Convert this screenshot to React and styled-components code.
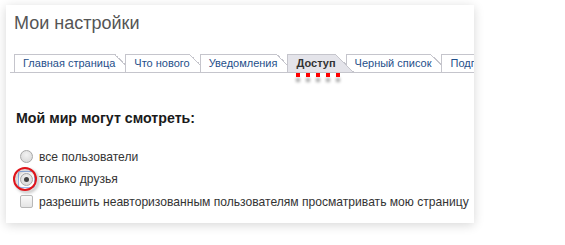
import styled, { createGlobalStyle } from "styled-components";

const Global = createGlobalStyle`
  body {
    margin: 0;
    background: #fff;
    font-family: "Liberation Sans", Arial, sans-serif;
  }
`;

const Page = styled.div`
  padding: 5px 0 0 6px;
  width: 565px;
  height: 245px;
  box-sizing: border-box;
`;

const Card = styled.div`
  width: 468px;
  height: 218px;
  background: #fff;
  box-shadow: 0 2px 10px rgba(0, 0, 0, 0.16);
  overflow: hidden;
`;

const Title = styled.h1`
  margin: 7px 0 0 8px;
  font-size: 18px;
  line-height: 22px;
  font-weight: normal;
  color: #555;
`;

const TabBar = styled.div`
  display: flex;
  margin: 20px 0 0 4px;
  padding-left: 4px;
  height: 18px;
  border-bottom: 1px solid #c5c5cc;
  white-space: nowrap;
`;

const Tab = styled.div`
  position: relative;
  z-index: ${(p) => (p.$active ? 20 : p.$index)};
  flex: none;
  height: 18px;
  line-height: 18px;
  padding: 0 18px 0 9px;
  margin-right: -8px;
  font-size: 11px;
  font-weight: ${(p) => (p.$active ? "bold" : "normal")};
  color: ${(p) => (p.$active ? "#333" : "#1f4f8a")};

  &::before {
    content: "";
    position: absolute;
    top: 0;
    bottom: 0;
    left: 0;
    right: 18px;
    background: ${(p) => (p.$active ? "#e4e4ea" : "#fff")};
    border-left: 1px solid #c5c5cc;
    border-top: 1px solid #c5c5cc;
    z-index: -1;
  }

  &::after {
    content: "";
    position: absolute;
    top: 0;
    bottom: 0;
    right: 0;
    width: 18px;
    background: linear-gradient(
      to top right,
      ${(p) => (p.$active ? "#e4e4ea" : "#fff")} calc(50% - 1px),
      #c5c5cc calc(50% - 1px),
      #c5c5cc 50%,
      transparent 50%
    );
    z-index: -1;
  }
`;

const Marked = styled.span`
  position: relative;

  &::after {
    content: "";
    position: absolute;
    left: 0;
    right: -4px;
    top: 16px;
    height: 4px;
    background: repeating-linear-gradient(
      to right,
      #f00 0 4px,
      transparent 4px 10px
    );
    filter: drop-shadow(0 5px 1.5px rgba(0, 0, 0, 0.35));
  }
`;

const Body = styled.div`
  padding: 37px 0 0 10px;
`;

const Heading = styled.h2`
  margin: 0 0 21px;
  font-size: 14.2px;
  line-height: 17px;
  font-weight: bold;
  color: #1a1a1a;
`;

const Options = styled.div`
  display: flex;
  flex-direction: column;
  gap: 5.5px;
  padding-left: 2px;
`;

const Option = styled.label`
  position: relative;
  display: flex;
  align-items: center;
  gap: 4px;
  height: 17px;
  font-size: 12.1px;
  color: #333;
  white-space: nowrap;
`;

const Control = styled.span`
  display: flex;
  align-items: center;
  justify-content: center;
  width: 17px;
  height: 17px;
  box-sizing: border-box;
  border: 1px solid ${(p) => (p.$focused ? "#9cbcf2" : "transparent")};
  border-radius: 2px;
`;

const Radio = styled.span`
  display: flex;
  align-items: center;
  justify-content: center;
  width: 13px;
  height: 13px;
  box-sizing: border-box;
  border-radius: 50%;
  border: 1px solid #a8a8a8;
  background: radial-gradient(circle at 50% 35%, #f2f2f2, #d4d4d4);

  &::after {
    content: "";
    display: ${(p) => (p.$checked ? "block" : "none")};
    width: 5px;
    height: 5px;
    border-radius: 50%;
    background: #444;
  }
`;

const Check = styled.span`
  width: 13px;
  height: 13px;
  box-sizing: border-box;
  border-radius: 2px;
  border: 1px solid #b8b8b8;
  background: linear-gradient(#fafafa, #e4e4e4);
`;

const Ring = styled.span`
  position: absolute;
  left: -5px;
  top: -4px;
  width: 24px;
  height: 24px;
  box-sizing: border-box;
  border: 2px solid #e0141b;
  border-radius: 50%;
  filter: drop-shadow(2px 2px 1.5px rgba(0, 0, 0, 0.3));
  pointer-events: none;
`;

const tabs = [
  "Главная страница",
  "Что нового",
  "Уведомления",
  "Доступ",
  "Черный список",
  "Подписки",
];

export default function App() {
  return (
    <Page>
      <Global />
      <Card>
        <Title>Мои настройки</Title>
        <TabBar>
          {tabs.map((t, i) => (
            <Tab key={t} $index={i + 1} $active={t === "Доступ"}>
              {t === "Доступ" ? <Marked>{t}</Marked> : t}
            </Tab>
          ))}
        </TabBar>
        <Body>
          <Heading>Мой мир могут смотреть:</Heading>
          <Options>
            <Option>
              <Control>
                <Radio />
              </Control>
              все пользователи
            </Option>
            <Option>
              <Control $focused>
                <Radio $checked />
              </Control>
              только друзья
              <Ring />
            </Option>
            <Option>
              <Control>
                <Check />
              </Control>
              разрешить неавторизованным пользователям просматривать мою страницу
            </Option>
          </Options>
        </Body>
      </Card>
    </Page>
  );
}
